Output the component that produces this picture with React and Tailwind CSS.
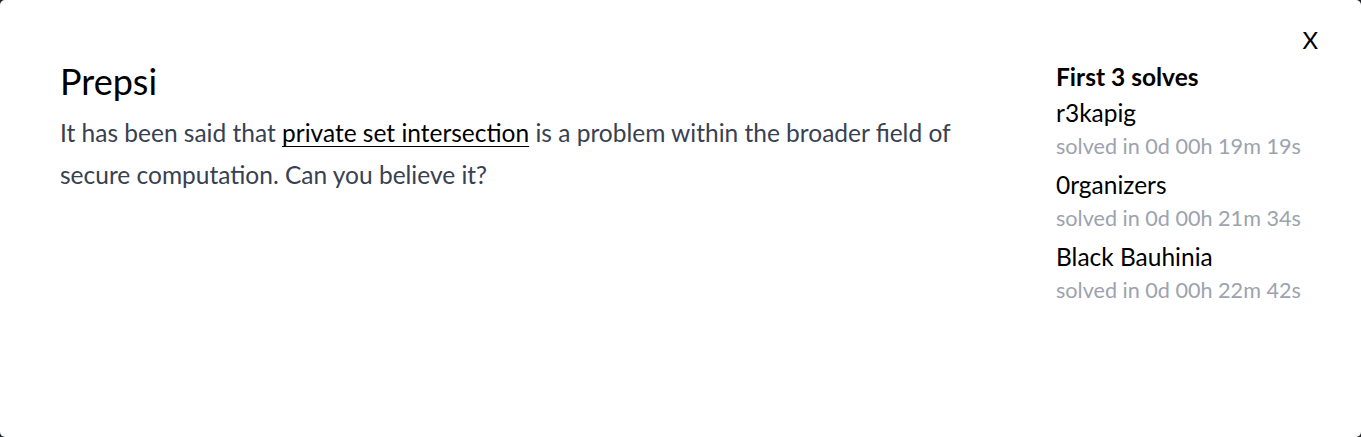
export default function App() {
  const solves = [
    { team: 'r3kapig', time: '0d 00h 19m 19s' },
    { team: '0rganizers', time: '0d 00h 21m 34s' },
    { team: 'Black Bauhinia', time: '0d 00h 22m 42s' },
  ]

  return (
    <div className="h-[437px] w-full bg-[#1f2328]" style={{ fontFamily: 'Lato, "Noto Sans", sans-serif' }}>
      <div className="relative h-full w-full rounded-[5px] bg-white">
        {/* close */}
        <button className="absolute right-[43px] top-[28px] text-[24px] leading-none text-black">
          X
        </button>

        <div className="flex h-full">
          {/* challenge */}
          <div className="flex-1 pl-[60px] pr-[80px] pt-[59px]">
            <h2 className="text-[36px] leading-[44px] text-black">Prepsi</h2>
            <p className="mt-[9px] text-[24.5px] leading-[42px] text-[#374151]">
              It has been said that{' '}
              <a href="#" className="text-black underline underline-offset-[4px] decoration-1">
                private set intersection
              </a>{' '}
              is a problem within the broader field of secure computation. Can you believe it?
            </p>
          </div>

          {/* first solves */}
          <div className="w-[305px] shrink-0 pt-[63px]">
            <h3 className="text-[24.5px] font-bold leading-[28px] text-black">First 3 solves</h3>
            <div className="mt-[8px] flex flex-col gap-[11px]">
              {solves.map((s) => (
                <div key={s.team}>
                  <div className="text-[24.5px] leading-[28px] text-black">{s.team}</div>
                  <div className="mt-[5px] text-[21.6px] leading-[28px] text-[#9ca3af]">
                    solved in {s.time}
                  </div>
                </div>
              ))}
            </div>
          </div>
        </div>
      </div>
    </div>
  )
}
